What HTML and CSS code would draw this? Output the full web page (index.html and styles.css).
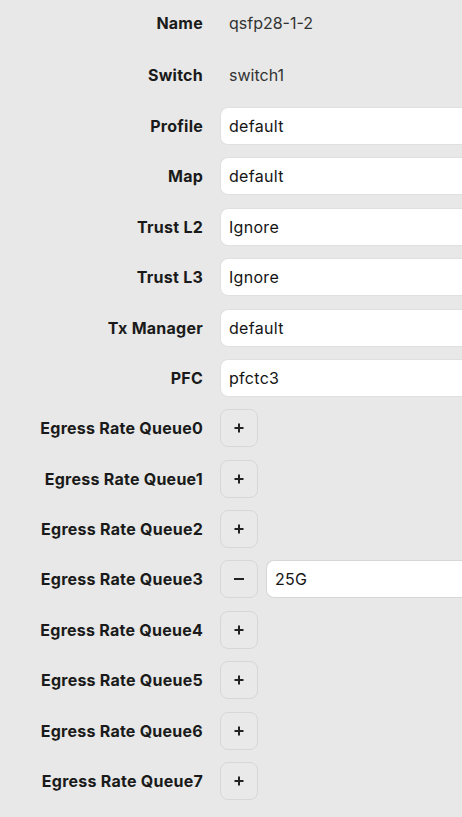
FILE: index.html
```html
<!DOCTYPE html>
<html lang="en">
<head>
<meta charset="utf-8">
<title>Port</title>
<link rel="stylesheet" href="styles.css">
</head>
<body>
<div class="form">
  <div class="row static"><div class="label">Name</div><div class="value">qsfp28-1-2</div></div>
  <div class="row static"><div class="label">Switch</div><div class="value">switch1</div></div>
  <div class="row"><div class="label">Profile</div><div class="field">default</div></div>
  <div class="row"><div class="label">Map</div><div class="field">default</div></div>
  <div class="row"><div class="label">Trust L2</div><div class="field">Ignore</div></div>
  <div class="row"><div class="label">Trust L3</div><div class="field">Ignore</div></div>
  <div class="row"><div class="label">Tx Manager</div><div class="field">default</div></div>
  <div class="row"><div class="label">PFC</div><div class="field">pfctc3</div></div>
  <div class="row"><div class="label">Egress Rate Queue0</div><div class="ctl"><button class="btn"><svg viewBox="0 0 12 12" width="12" height="12"><path d="M6 1.5v9M1.5 6h9"/></svg></button></div></div>
  <div class="row"><div class="label">Egress Rate Queue1</div><div class="ctl"><button class="btn"><svg viewBox="0 0 12 12" width="12" height="12"><path d="M6 1.5v9M1.5 6h9"/></svg></button></div></div>
  <div class="row"><div class="label">Egress Rate Queue2</div><div class="ctl"><button class="btn"><svg viewBox="0 0 12 12" width="12" height="12"><path d="M6 1.5v9M1.5 6h9"/></svg></button></div></div>
  <div class="row"><div class="label">Egress Rate Queue3</div><div class="ctl"><button class="btn"><svg viewBox="0 0 12 12" width="12" height="12"><path d="M1 6h10"/></svg></button><div class="field">25G</div></div></div>
  <div class="row"><div class="label">Egress Rate Queue4</div><div class="ctl"><button class="btn"><svg viewBox="0 0 12 12" width="12" height="12"><path d="M6 1.5v9M1.5 6h9"/></svg></button></div></div>
  <div class="row"><div class="label">Egress Rate Queue5</div><div class="ctl"><button class="btn"><svg viewBox="0 0 12 12" width="12" height="12"><path d="M6 1.5v9M1.5 6h9"/></svg></button></div></div>
  <div class="row"><div class="label">Egress Rate Queue6</div><div class="ctl"><button class="btn"><svg viewBox="0 0 12 12" width="12" height="12"><path d="M6 1.5v9M1.5 6h9"/></svg></button></div></div>
  <div class="row"><div class="label">Egress Rate Queue7</div><div class="ctl"><button class="btn"><svg viewBox="0 0 12 12" width="12" height="12"><path d="M6 1.5v9M1.5 6h9"/></svg></button></div></div>
</div>
</body>
</html>
```
FILE: styles.css
```css
html, body {
  margin: 0;
  padding: 0;
  background: #e7e8e7;
}
body {
  font-family: Inter, "Noto Sans", sans-serif;
  font-size: 16px;
  color: #1b1b1b;
}
.form {
  display: flex;
  flex-direction: column;
  gap: 12.4px;
  padding-top: 3.2px;
}
.row {
  display: flex;
  align-items: center;
  gap: 17px;
  height: 38px;
}
.row.static {
  height: 39.5px;
}
.label {
  width: 203px;
  flex: none;
  text-align: right;
  font-weight: 700;
  letter-spacing: 0.25px;
  color: #1a1a1a;
}
.value {
  padding-left: 9px;
  color: #333;
}
.field {
  flex: 1;
  align-self: stretch;
  box-sizing: border-box;
  height: 38px;
  background: #fff;
  border: 1px solid #e0e0e0;
  border-right: 0;
  border-radius: 8px 0 0 8px;
  padding: 0 8px;
  display: flex;
  align-items: center;
  color: #141414;
  letter-spacing: 0.3px;
}
.ctl {
  flex: 1;
  align-self: stretch;
  display: flex;
  align-items: center;
  gap: 8px;
}
.ctl .field {
  border-color: #d6d7d6;
}
.btn {
  flex: none;
  box-sizing: border-box;
  width: 38px;
  height: 38px;
  padding: 0;
  margin: 0;
  border: 1px solid #d6d7d6;
  border-radius: 8px;
  background: #e8e9e8;
  display: flex;
  align-items: center;
  justify-content: center;
}
.btn svg {
  display: block;
  fill: none;
  stroke: #222;
  stroke-width: 2;
}
```
